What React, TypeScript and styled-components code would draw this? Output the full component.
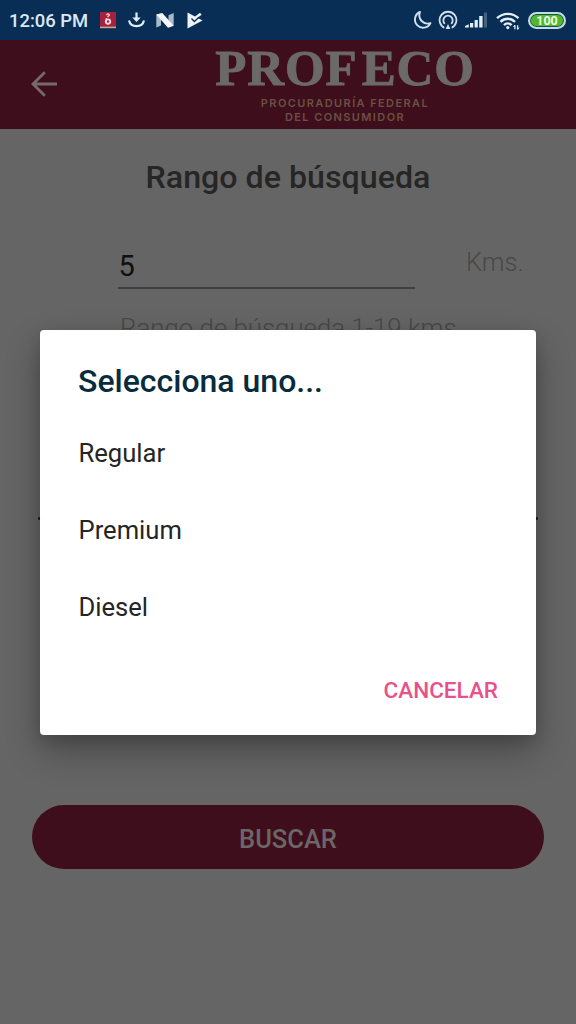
import React from "react";
import styled, { createGlobalStyle } from "styled-components";

const Global = createGlobalStyle`
  * { box-sizing: border-box; }
  body { margin: 0; background: #656565; font-family: Roboto, sans-serif; }
  svg { display: block; flex: none; }
`;

const Screen = styled.div`
  position: relative;
  width: 576px;
  height: 1024px;
  overflow: hidden;
  background: #656565;
  display: flex;
  flex-direction: column;
`;

const StatusBar = styled.div`
  height: 40px;
  flex: none;
  background: #092e55;
  display: flex;
  align-items: center;
  justify-content: space-between;
  padding: 0 10px 0 9px;
`;

const StatusGroup = styled.div`
  display: flex;
  align-items: center;
`;

const Clock = styled.span`
  font-size: 18.4px;
  line-height: 20px;
  font-weight: 500;
  color: #dde8f4;
  width: 80px;
  white-space: nowrap;
  margin-top: 1px;
`;

const Header = styled.header`
  height: 89px;
  flex: none;
  background: #3f0e1c;
  display: flex;
  align-items: flex-start;
`;

const BackButton = styled.button`
  border: 0;
  background: none;
  padding: 29px 0 0 29px;
  width: 200px;
  text-align: left;
`;

const Brand = styled.div`
  width: 290px;
  display: flex;
  flex-direction: column;
  align-items: center;
`;

const BrandName = styled.div`
  font-family: "Liberation Serif", serif;
  font-weight: 700;
  font-size: 51px;
  line-height: 56px;
  letter-spacing: 0.9px;
  color: #6c6969;
  -webkit-text-stroke: 0.9px #6c6969;
  white-space: nowrap;
`;

const WideLetter = styled.span`
  letter-spacing: 5px;
`;

const BrandLine = styled.div`
  font-family: Inter, sans-serif;
  font-weight: 600;
  font-size: 11px;
  line-height: 14px;
  letter-spacing: 1.4px;
  color: #6a5043;
  white-space: nowrap;
`;

const Content = styled.main`
  flex: 1;
  display: flex;
  flex-direction: column;
`;

const Heading = styled.h1`
  margin: 28px 0 0;
  text-align: center;
  font-size: 32.2px;
  line-height: 40px;
  font-weight: 500;
  color: #262626;
`;

const FieldRow = styled.div`
  margin: 46px 0 0 118px;
  display: flex;
`;

const Field = styled.div`
  width: 297px;
  height: 46px;
  border-bottom: 2px solid #404040;
  padding: 5px 0 0 0.5px;
  font-size: 29px;
  line-height: 36px;
  color: #101010;
`;

const Unit = styled.span`
  margin-left: 51px;
  font-size: 25.6px;
  line-height: 34px;
  padding-top: 2px;
  font-weight: 300;
  color: #484848;
`;

const Hint = styled.p`
  margin: 23px 0 0 120px;
  font-size: 25.8px;
  line-height: 32px;
  font-weight: 300;
  color: #484848;
  white-space: nowrap;
`;

const Divider = styled.div`
  margin: 173px 38px 0;
  height: 3px;
  border-radius: 1px;
  background: #3f0e1c;
`;

const SearchButton = styled.button`
  margin: 285px 32px 0;
  height: 64px;
  border: 0;
  border-radius: 32px;
  background: #3f0e1c;
  color: #6c6668;
  font: 500 25.5px/60px Roboto, sans-serif;
  padding: 4px 0 0;
`;

const Dialog = styled.section`
  position: absolute;
  left: 40px;
  top: 330px;
  width: 496px;
  height: 405px;
  border-radius: 4px;
  background: #fff;
  box-shadow: 0 16px 34px rgba(0, 0, 0, 0.3), 0 4px 14px rgba(0, 0, 0, 0.12);
  padding: 31px 38px 0;
  display: flex;
  flex-direction: column;
`;

const DialogTitle = styled.h2`
  margin: 0 0 14px;
  font-size: 32px;
  line-height: 40px;
  font-weight: 500;
  color: #082c3d;
`;

const Option = styled.div`
  height: 77px;
  line-height: 77px;
  font-size: 25.6px;
  color: #252525;
  padding-left: 0.5px;
`;

const CancelButton = styled.button`
  align-self: flex-end;
  border: 0;
  background: none;
  padding: 0;
  margin-top: 29px;
  font: 500 22.5px/30px Roboto, sans-serif;
  color: #e9518b;
`;

const AppBadge = () => (
  <svg width="16" height="17" viewBox="0 0 16 17">
    <rect width="16" height="15" fill="#a7213f" />
    <rect y="14.6" width="16" height="1.6" fill="#c9a58c" />
    <circle cx="8" cy="9.6" r="2.2" fill="none" stroke="#f3d9dc" strokeWidth="1.9" />
    <path d="M6.3 6V11M6.6 3.3c0-2 2.8-2 2.8 0L7.5 5" fill="none" stroke="#f3d9dc" strokeWidth="1.2" />
  </svg>
);

const DownloadIcon = () => (
  <svg width="17" height="16" viewBox="0 0 17 16" fill="none" stroke="#e4edf5" strokeWidth="2.2">
    <path d="M8.5 0.5v7" />
    <path d="M4.3 5.5h8.4L8.5 10z" fill="#e4edf5" stroke="none" />
    <path d="M1.3 9.3c1.5 6.4 12.9 6.4 14.4 0" strokeLinecap="round" />
  </svg>
);

const NewsIcon = () => (
  <svg width="18" height="15" viewBox="0 0 18 15">
    <path d="M0.3 1.5L5 0.5v12L0.3 14.5z" fill="#a9b9c9" />
    <path d="M12.5 2.3L17.7 0v12.5l-5.2 2z" fill="#a9b9c9" />
    <path d="M0.3 1.5L6.3 0 17.7 12.7 12 14.7z" fill="#f5f8fb" />
  </svg>
);

const PlayCheckIcon = () => (
  <svg width="16" height="17" viewBox="0 0 16 17">
    <path d="M0.5 0.5L15.5 8.5 0.5 16.5z" fill="#eef3f8" />
    <path d="M7.5 6.5L13.8 1.8" fill="none" stroke="#eef3f8" strokeWidth="2.6" />
    <path d="M4.5 6.5l2.8 3L12 5.3" fill="none" stroke="#092e55" strokeWidth="1.3" />
  </svg>
);

const MoonIcon = () => (
  <svg width="20" height="20" viewBox="0 0 20 20" fill="none" stroke="#cfdfed" strokeWidth="1.9" strokeLinejoin="round">
    <path d="M8 2A8.2 8.2 0 1 0 18.5 13.2C11.5 15.3 5.5 9 8 2z" />
  </svg>
);

const HotspotIcon = () => (
  <svg width="20" height="20" viewBox="0 0 20 20" fill="none" stroke="#cfdfed" strokeWidth="1.8">
    <path d="M6.3 17.7a8.4 8.4 0 1 1 7.4 0" />
    <path d="M6.8 13.8a4.7 4.7 0 1 1 6.4 0" />
    <path d="M10 14l2.4 5H7.6z" fill="#cfdfed" stroke="none" />
  </svg>
);

const SignalIcon = () => (
  <svg width="23" height="16" viewBox="0 0 23 16" fill="#e4edf5">
    <path d="M0 15.5V14L3.8 12.3V15.5z" />
    <rect x="5" y="11" width="3.2" height="4.5" />
    <rect x="9.6" y="8" width="3.2" height="7.5" />
    <rect x="14.2" y="4" width="3.4" height="11.5" />
    <rect x="19" y="0.5" width="3" height="15" fill="#45617f" />
  </svg>
);

const WifiIcon = () => (
  <svg width="24" height="18" viewBox="0 0 24 18" fill="none" stroke="#e4edf5" strokeWidth="2.4">
    <path d="M1 6.200c6.200-5.800 15.300-5.800 21.500 0" />
    <path d="M4.500 9.800c4.300-4 10.200-4 14.500 0" />
    <path d="M8 13.200c2.200-2.200 5.400-2.200 7.600 0" />
    <circle cx="11.8" cy="15.600" r="1.6" fill="#e4edf5" stroke="none" />
    <path d="M18.900 13.200v4M21.600 13.200v4" strokeWidth="1.3" />
    <path d="M17.400 15l1.500-2M23.100 15.600l-1.500 2" strokeWidth="1" />
  </svg>
);

const BatteryPill = styled.div`
  width: 38px;
  height: 17px;
  border-radius: 9px;
  border: 2px solid #c5dbe8;
  background: #4fb82f;
  box-shadow: inset 0 0 0 1px #1d5544;
  color: #eefbe8;
  font-size: 12.5px;
  line-height: 13.5px;
  font-weight: 700;
  text-align: center;
`;

const Slot = styled.div<{ $gap: number; $drop?: number }>`
  margin-left: ${(p) => p.$gap}px;
  padding-top: ${(p) => p.$drop ?? 0}px;
`;

export default function App() {
  return (
    <Screen>
      <Global />
      <StatusBar>
        <StatusGroup>
          <Clock>12:06 PM</Clock>
          <Slot $gap={11}><AppBadge /></Slot>
          <Slot $gap={12}><DownloadIcon /></Slot>
          <Slot $gap={11}><NewsIcon /></Slot>
          <Slot $gap={13}><PlayCheckIcon /></Slot>
        </StatusGroup>
        <StatusGroup>
          <Slot $gap={0}><MoonIcon /></Slot>
          <Slot $gap={6}><HotspotIcon /></Slot>
          <Slot $gap={7}><SignalIcon /></Slot>
          <Slot $gap={8} $drop={2}><WifiIcon /></Slot>
          <Slot $gap={8}><BatteryPill>100</BatteryPill></Slot>
        </StatusGroup>
      </StatusBar>
      <Header>
        <BackButton aria-label="Atrás">
          <svg width="30" height="30" viewBox="0 0 30 30" fill="none" stroke="#766a6e" strokeWidth="2.8">
            <path d="M28 15H4M15.8 3.2L4 15l11.8 11.8" />
          </svg>
        </BackButton>
        <Brand>
          <BrandName>PRO<WideLetter>F</WideLetter>ECO</BrandName>
          <BrandLine>PROCURADURÍA FEDERAL</BrandLine>
          <BrandLine>DEL CONSUMIDOR</BrandLine>
        </Brand>
      </Header>
      <Content>
        <Heading>Rango de búsqueda</Heading>
        <FieldRow>
          <Field>5</Field>
          <Unit>Kms.</Unit>
        </FieldRow>
        <Hint>Rango de búsqueda 1-19 kms.</Hint>
        <Divider />
        <SearchButton>BUSCAR</SearchButton>
      </Content>
      <Dialog role="dialog">
        <DialogTitle>Selecciona uno...</DialogTitle>
        <Option>Regular</Option>
        <Option>Premium</Option>
        <Option>Diesel</Option>
        <CancelButton>CANCELAR</CancelButton>
      </Dialog>
    </Screen>
  );
}
